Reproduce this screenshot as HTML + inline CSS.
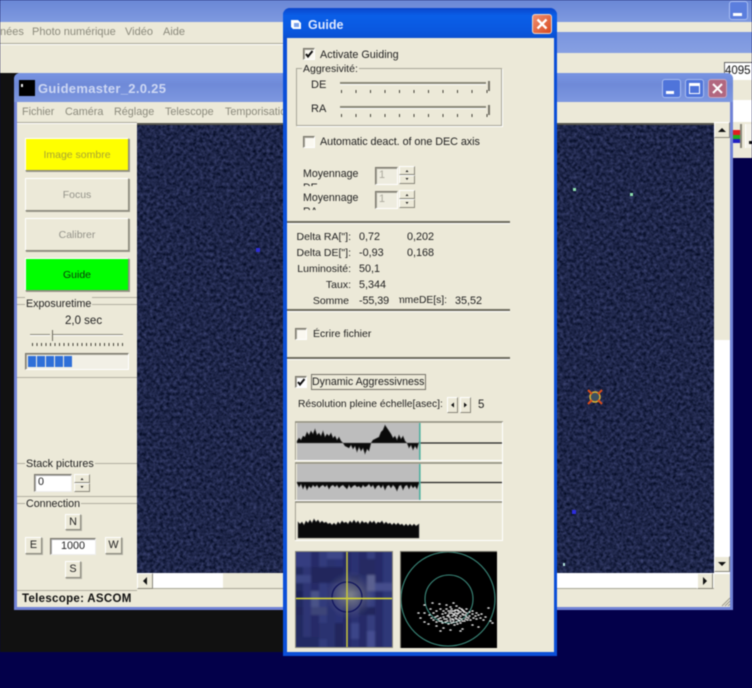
<!DOCTYPE html>
<html lang="fr"><head><meta charset="utf-8"><title>Guidemaster</title>
<style>
html,body{margin:0;padding:0;background:#03004a}
#r{position:relative;width:752px;height:688px;overflow:hidden;background:#03004a;font:10.8px "Liberation Sans",sans-serif;color:#222;filter:blur(.4px)}
#r div,#r span,#r svg{position:absolute;box-sizing:border-box}
.t{white-space:nowrap;line-height:14px;height:14px;margin-top:1px}
.g{color:#8b8a7c}
.b{background:#ece9d8;border:1px solid;border-color:#fff #8a887c #8a887c #fff;box-shadow:1px 1px 0 #b4b2a6;text-align:center;line-height:14px}
.p{font-size:10.5px;line-height:33px;box-shadow:1px 1px 0 #9a988a}
.c{background:#faf8f0;border:1px solid;border-color:#77756a #fff #fff #77756a;box-shadow:inset 1px 1px 0 #a5a397}
.i{background:#fff;border:1px solid;border-color:#77756a #eee #eee #77756a;box-shadow:inset 1px 1px 0 #aaa;padding-left:3px;line-height:15px}
.l{height:2px;background:#6e6c5f;border-bottom:1px solid #fff}
.f{height:1px;background:#b1afa1;border-bottom:0}
.w{background:#ece9d8}
</style></head><body><div id="r">

<!-- background windows -->
<div style="left:0;top:0;width:752px;height:22px;background:linear-gradient(#6a87d6,#7f9ae0)"></div>
<div class="w" style="left:0;top:22px;width:752px;height:51px"></div>
<div style="left:0;top:43px;width:300px;height:2px;background:#a9a797;border-bottom:1px solid #fff"></div>
<div style="left:557px;top:32px;width:195px;height:21px;background:linear-gradient(#7a95df,#87a0e2)"></div>
<div class="t g" style="left:0;top:24px;font-size:11px">nées</div>
<div class="t g" style="left:32px;top:24px;font-size:11px">Photo numérique</div>
<div class="t g" style="left:125px;top:24px;font-size:11px">Vidéo</div>
<div class="t g" style="left:163px;top:24px;font-size:11px">Aide</div>
<div style="left:729px;top:1px;width:19px;height:19px;border-radius:3px;background:#5b7edd;border:1px solid #a9bdf0"></div>
<div style="left:733px;top:13px;width:9px;height:3px;background:#fff"></div>
<div style="left:0;top:73px;width:290px;height:579px;background:#111"></div>
<div class="w" style="left:733px;top:73px;width:19px;height:85px"></div>
<div style="left:733px;top:100px;width:19px;height:22px;background:#fff"></div>
<div style="left:733px;top:158px;width:19px;height:530px;background:#03004a"></div>
<div style="left:733px;top:130px;width:7px;height:5px;background:#e02020"></div>
<div style="left:733px;top:135px;width:7px;height:4px;background:#20b020"></div>
<div style="left:733px;top:139px;width:7px;height:4px;background:#2020c0"></div>
<div style="left:740px;top:124px;width:2px;height:24px;background:#888678"></div>
<div style="left:745px;top:124px;width:7px;height:24px;background:#f4f2e8;border-left:1px solid #fff"></div>
<div style="left:749px;top:141px;width:3px;height:3px;background:#111"></div>
<div style="left:724px;top:62px;width:28px;height:18px;background:#fff;border-left:1px solid #666;border-top:1px solid #666;line-height:16px;font-size:11.5px;color:#111">4095</div>

<!-- main window -->
<div style="left:14px;top:73px;width:719px;height:537px;background:#7082d6;border-radius:6px 6px 0 0"></div>
<div style="left:14px;top:73px;width:719px;height:29px;background:linear-gradient(#7894e2,#6f8ad8 40%,#7e98e0);border-radius:6px 6px 0 0"></div>
<div style="left:19px;top:80px;width:16px;height:16px;background:#000"></div>
<div style="left:21px;top:84px;width:2px;height:3px;background:#eee"></div>
<div class="t" style="left:38px;top:80px;height:16px;line-height:16px;font-size:13px;font-weight:bold;color:#cdd7f3;letter-spacing:.3px">Guidemaster_2.0.25</div>
<div style="left:662px;top:79px;width:19px;height:19px;border-radius:3px;background:#4f74da;border:1px solid #a9bdf0"></div>
<div style="left:666px;top:91px;width:8px;height:3px;background:#fff"></div>
<div style="left:685px;top:79px;width:19px;height:19px;border-radius:3px;background:#4f74da;border:1px solid #a9bdf0"></div>
<div style="left:689px;top:83px;width:11px;height:11px;border:1px solid #fff;border-top-width:3px"></div>
<div style="left:708px;top:79px;width:19px;height:19px;border-radius:3px;background:#b2677f;border:1px solid #c7a6c0"></div>
<svg style="left:708px;top:79px" width="19" height="19"><path d="M5 5L14 14M14 5L5 14" stroke="#fff" stroke-width="2"/></svg>
<div class="w" style="left:17px;top:102px;width:713px;height:505px"></div>
<div class="t g" style="left:22px;top:104px">Fichier</div>
<div class="t g" style="left:65px;top:104px">Caméra</div>
<div class="t g" style="left:114px;top:104px">Réglage</div>
<div class="t g" style="left:165px;top:104px">Telescope</div>
<div class="t g" style="left:225px;top:104px">Temporisation</div>
<div style="left:17px;top:122px;width:120px;height:2px;background:#aaa89a;border-bottom:1px solid #fff"></div>

<!-- star image -->
<svg style="left:137px;top:123px" width="577" height="450">
<filter id="n" x="0" y="0" width="100%" height="100%" color-interpolation-filters="sRGB"><feTurbulence type="fractalNoise" baseFrequency=".3" numOctaves="3" seed="7"/><feColorMatrix values=".3 0 0 0 -.03 .3 0 0 0 0 .42 0 0 0 .08 0 0 0 0 1"/></filter>
<rect width="577" height="450" fill="#1c2750"/><rect width="577" height="450" filter="url(#n)"/>
<rect width="577" height="2" fill="#55544c"/>
<g>
<rect x="436" y="65" width="3" height="3" fill="#8fe0b0"/><rect x="493" y="70" width="3" height="3" fill="#8fe0b0"/>
<rect x="119" y="125" width="4" height="4" fill="#2d2dd8"/>
<rect x="435" y="387" width="4" height="4" fill="#2d2de0"/>
<rect x="426" y="440" width="2" height="3" fill="#b0e0d8"/>
<circle cx="458" cy="274" r="5" fill="#3c5060" stroke="#d8b030" stroke-width="1.500"/>
<path d="M451 267L455 271M465 267L461 271M451 281L455 277M465 281L461 277" stroke="#d84c1c" stroke-width="2"/>
</g>
</svg>

<!-- left panel -->
<div class="b p" style="left:25px;top:138px;width:104px;height:33px;background:#ff0;color:#a8a432">Image sombre</div>
<div class="b p" style="left:25px;top:178px;width:104px;height:33px;color:#94938a">Focus</div>
<div class="b p" style="left:25px;top:218px;width:104px;height:33px;color:#94938a">Calibrer</div>
<div class="b p" style="left:25px;top:258px;width:104px;height:33px;background:#0f0;color:#0b3a0b">Guide</div>
<div class="f" style="left:17px;top:297px;width:120px"></div>
<div class="f" style="left:17px;top:304px;width:120px"></div>
<div class="t w" style="left:25px;top:296px;padding:0 1px;font-size:10.7px">Exposuretime</div>
<div class="t" style="left:65px;top:313px;font-size:11.500px">2,0 sec</div>
<div style="left:30px;top:334px;width:93px;height:2px;background:#8d8b7c;border-bottom:1px solid #fff"></div>
<div style="left:50px;top:330px;width:3px;height:11px;background:#ece9d8;border-right:1px solid #6e6c5f"></div>
<svg style="left:32px;top:342px" width="92" height="5"><line x1="0" y1="2.500" x2="92" y2="2.500" stroke="#444238" stroke-width="3" stroke-dasharray="1 3.500"/></svg>
<div class="c" style="left:25px;top:353px;width:104px;height:17px;background:#f2f0e6"></div>
<div style="left:28px;top:356px;width:8px;height:11px;background:#2f6fd8"></div>
<div style="left:37px;top:356px;width:8px;height:11px;background:#2f6fd8"></div>
<div style="left:46px;top:356px;width:8px;height:11px;background:#2f6fd8"></div>
<div style="left:55px;top:356px;width:8px;height:11px;background:#2f6fd8"></div>
<div style="left:64px;top:356px;width:8px;height:11px;background:#2f6fd8"></div>
<div class="f" style="left:17px;top:377px;width:120px"></div>
<div class="f" style="left:17px;top:463px;width:120px"></div>
<div class="t w" style="left:25px;top:456px;padding:0 1px;font-size:10.8px">Stack pictures</div>
<div class="i" style="left:34px;top:474px;width:38px;height:18px">0</div>
<div class="b" style="left:74px;top:474px;width:16px;height:9px;box-shadow:none"></div>
<div class="b" style="left:74px;top:483px;width:16px;height:9px;box-shadow:none"></div>
<svg style="left:74px;top:474px" width="16" height="18"><path d="M6.500 6H9.500L8 4ZM6.500 12H9.500L8 14Z" fill="#222"/></svg>
<div class="f" style="left:17px;top:496px;width:120px"></div>
<div class="f" style="left:17px;top:503px;width:120px"></div>
<div class="t w" style="left:25px;top:496px;padding:0 1px;font-size:10.7px">Connection</div>
<div class="b" style="left:65px;top:514px;width:16px;height:16px">N</div>
<div class="b" style="left:25px;top:537px;width:17px;height:17px">E</div>
<div class="i" style="left:50px;top:538px;width:46px;height:17px;text-align:center;padding-left:0">1000</div>
<div class="b" style="left:105px;top:537px;width:17px;height:17px">W</div>
<div class="b" style="left:65px;top:561px;width:16px;height:17px">S</div>
<div style="left:17px;top:590px;width:120px;height:1px;background:#b1afa1"></div>
<div class="t" style="left:22px;top:591px;font-size:11.500px;font-weight:bold;color:#111;letter-spacing:.3px">Telescope: ASCOM</div>

<!-- scrollbars -->
<div style="left:714px;top:122px;width:16px;height:452px;background:#fff"></div>
<div class="w" style="left:714px;top:122px;width:16px;height:218px"></div>
<div class="b" style="left:714px;top:122px;width:16px;height:16px;box-shadow:none"></div>
<div class="b" style="left:714px;top:556px;width:16px;height:16px;box-shadow:none"></div>
<svg style="left:714px;top:122px" width="16" height="16"><path d="M4 10H12L8 6Z" fill="#111"/></svg>
<svg style="left:714px;top:556px" width="16" height="16"><path d="M4 6H12L8 10Z" fill="#111"/></svg>
<div style="left:137px;top:573px;width:577px;height:16px;background:#fff;border-bottom:1px solid #a9a797"></div>
<div class="w" style="left:223px;top:573px;width:70px;height:16px;border-bottom:1px solid #a9a797"></div>
<div class="b" style="left:137px;top:573px;width:16px;height:16px;box-shadow:none"></div>
<div class="b" style="left:697px;top:573px;width:16px;height:16px;box-shadow:none"></div>
<svg style="left:137px;top:573px" width="16" height="16"><path d="M10 4V12L6 8Z" fill="#111"/></svg>
<svg style="left:697px;top:573px" width="16" height="16"><path d="M6 4V12L10 8Z" fill="#111"/></svg>
<svg style="left:721px;top:597px" width="10" height="10"><path d="M9 1L1 9M9 4L4 9M9 7L7 9" stroke="#9c9a8c"/></svg>

<!-- Guide dialog -->
<div style="left:283px;top:8px;width:274px;height:648px;background:#0b4fd8;border-radius:7px 7px 0 0"></div>
<div style="left:283px;top:8px;width:274px;height:31px;background:linear-gradient(#0a46cc,#0a5fe8 25%,#0a58e0 70%,#0a4fd0);border-radius:7px 7px 0 0"></div>
<div class="w" style="left:287px;top:38px;width:267px;height:614px"></div>
<svg style="left:290px;top:19px" width="13" height="12"><path d="M1 1H8L11 4V10H3L1 8Z" fill="#fff"/><path d="M4 4H9V8H4Z" fill="#7aa0e8"/></svg>
<div class="t" style="left:308px;top:17px;font-size:12.500px;font-weight:bold;color:#dfe8ff">Guide</div>
<div style="left:532px;top:14px;width:20px;height:20px;border-radius:3px;background:linear-gradient(135deg,#f09070,#d84a20);border:1px solid #f0d8c8"></div>
<svg style="left:532px;top:14px" width="20" height="20"><path d="M5.500 5.500L14.500 14.500M14.500 5.500L5.500 14.500" stroke="#fff" stroke-width="2.300"/></svg>

<div class="c" style="left:303px;top:48px;width:12px;height:12px"></div>
<svg style="left:303px;top:48px" width="12" height="12"><path d="M3 6L5 8.500L9.500 3" fill="none" stroke="#111" stroke-width="2"/></svg>
<div class="t" style="left:320px;top:47px">Activate Guiding</div>
<div style="left:296px;top:68px;width:206px;height:58px;border:1px solid #a8a698;box-shadow:1px 1px 0 #fff"></div>
<div class="t w" style="left:302px;top:61px;padding:0 1px;font-size:10.500px">Aggresivité:</div>
<div class="t" style="left:311px;top:77px;font-size:11px">DE</div>
<div class="t" style="left:311px;top:101px;font-size:11px">RA</div>
<div style="left:340px;top:82px;width:146px;height:3px;background:#8a8878;border-bottom:1px solid #fff"></div>
<div style="left:340px;top:106px;width:146px;height:3px;background:#8a8878;border-bottom:1px solid #fff"></div>
<div style="left:488px;top:81px;width:2px;height:10px;background:#77756a"></div>
<div style="left:488px;top:105px;width:2px;height:10px;background:#77756a"></div>
<svg style="left:340px;top:90px" width="152" height="30"><path d="M1.500 0v3M16 0v3M30.500 0v3M45 0v3M59.500 0v3M74 0v3M88.500 0v3M103 0v3M117.500 0v3M132 0v3M147 0v3M1.500 24v3M16 24v3M30.500 24v3M45 24v3M59.500 24v3M74 24v3M88.500 24v3M103 24v3M117.500 24v3M132 24v3M147 24v3" stroke="#444238"/></svg>

<div class="c" style="left:303px;top:136px;width:12px;height:12px"></div>
<div class="t" style="left:320px;top:134px;letter-spacing:-.05px">Automatic deact. of one DEC axis</div>
<div class="t" style="left:303px;top:166px;overflow:hidden;height:19px;width:70px;white-space:normal;line-height:14px;font-size:10.600px">Moyennage<br>DE</div>
<div class="t" style="left:303px;top:190px;overflow:hidden;height:19px;width:70px;white-space:normal;line-height:14px;font-size:10.600px">Moyennage<br>RA</div>
<div class="c" style="left:375px;top:167px;width:23px;height:18px;padding-left:3px;line-height:15px;color:#aaa89c;background:#eeecdf">1</div>
<div class="c" style="left:375px;top:191px;width:23px;height:18px;padding-left:3px;line-height:15px;color:#aaa89c;background:#eeecdf">1</div>
<div class="b" style="left:399px;top:166px;width:16px;height:9px;box-shadow:none"></div>
<div class="b" style="left:399px;top:175px;width:16px;height:9px;box-shadow:none"></div>
<div class="b" style="left:399px;top:190px;width:16px;height:9px;box-shadow:none"></div>
<div class="b" style="left:399px;top:199px;width:16px;height:9px;box-shadow:none"></div>
<svg style="left:399px;top:166px" width="16" height="42"><path d="M6.500 6H9.500L8 4ZM6.500 12H9.500L8 14ZM6.500 30H9.500L8 28ZM6.500 36H9.500L8 38Z" fill="#222"/></svg>

<div class="l" style="left:287px;top:221px;width:223px;height:3px"></div>
<div class="t" style="left:280px;top:229px;width:71px;text-align:right;font-size:10.500px">Delta RA["]:</div>
<div class="t" style="left:280px;top:245px;width:71px;text-align:right;font-size:10.500px">Delta DE["]:</div>
<div class="t" style="left:280px;top:261px;width:71px;text-align:right;font-size:10.500px">Luminosité:</div>
<div class="t" style="left:280px;top:277px;width:71px;text-align:right;font-size:10.500px">Taux:</div>
<div class="t" style="left:280px;top:293px;width:69px;text-align:right;font-size:10.500px">Somme</div>
<div class="t" style="left:359px;top:229px">0,72</div>
<div class="t" style="left:359px;top:245px">-0,93</div>
<div class="t" style="left:359px;top:261px">50,1</div>
<div class="t" style="left:359px;top:277px">5,344</div>
<div class="t" style="left:359px;top:293px;letter-spacing:-.1px">-55,39</div>
<div class="t" style="left:407px;top:229px">0,202</div>
<div class="t" style="left:407px;top:245px">0,168</div>
<div class="t" style="left:399px;top:293px;width:48px;overflow:hidden"><span style="right:0;top:0;font-size:10.300px">SommeDE[s]:</span></div>
<div class="t" style="left:455px;top:293px">35,52</div>
<div class="l" style="left:287px;top:309px;width:223px;height:3px"></div>
<div class="c" style="left:295px;top:328px;width:12px;height:12px"></div>
<div class="t" style="left:313px;top:326px;font-size:10.500px">Écrire fichier</div>
<div class="l" style="left:287px;top:357px;width:223px;height:3px"></div>
<div class="c" style="left:295px;top:376px;width:12px;height:12px;background:#fff"></div>
<svg style="left:295px;top:376px" width="12" height="12"><path d="M3 6L5 8.500L9.500 3" fill="none" stroke="#111" stroke-width="2"/></svg>
<div style="left:311px;top:374px;width:115px;height:16px;border:1px solid #77756a"></div>
<div class="t" style="left:312px;top:374px;font-size:10.600px">Dynamic Aggressivness</div>
<div class="t" style="left:298px;top:397px;font-size:10.300px">Résolution pleine échelle[asec]:</div>
<div class="b" style="left:447px;top:397px;width:11px;height:16px;box-shadow:none"></div>
<div class="b" style="left:460px;top:397px;width:11px;height:16px;box-shadow:none"></div>
<svg style="left:447px;top:397px" width="24" height="16"><path d="M7 5.500V10.500L4 8ZM17 5.500V10.500L20 8Z" fill="#111"/></svg>
<div class="t" style="left:478px;top:397px;font-size:11.500px">5</div>

<!-- charts -->
<svg style="left:295px;top:421px" width="208" height="120">
<path d="M0 1V39M0 1H208M0 42V79M0 42H208M0 81V119M0 81H208" stroke="#8b8a7c" stroke-width="1.500" fill="none"/>
<path d="M0 39.500H208M0 79.500H208M0 119.500H208M207.500 1V120" stroke="#fff" stroke-width="1" fill="none"/>
<rect x="2" y="2" width="122" height="37" fill="#bdbdbd"/><rect x="2" y="43" width="122" height="36" fill="#bdbdbd"/>
<path d="M124 22H207M124 61.500H207" stroke="#222" stroke-width="1.300"/>
<rect x="124" y="2" width="1.600" height="37" fill="#50b0a0"/><rect x="124" y="43" width="1.600" height="36" fill="#50b0a0"/>
<path d="M2 20L4 17 6 19 8 15 10 16 12 11 14 14 16 10 18 13 20 8 22 14 24 12 26 15 28 10 30 16 32 13 34 15 36 12 38 17 40 15 42 19 44 16 46 20 48 22 50 25 52 26 54 27 56 24 58 28 60 25 62 31 64 26 66 30 68 27 70 33 72 28 74 30 76 22 78 19 80 18 82 17 84 16 86 11 88 9 90 4 92 7 94 10 96 13 98 17 100 15 102 19 104 14 106 18 108 15 110 20 112 22 114 27 116 24 118 29 120 25 122 28 124 21V22H2Z" fill="#0a0a0a" stroke="#555" stroke-width=".6"/>
<path d="M2 62L4 66 6 63 8 68 10 64 12 69 14 65 16 67 18 64 20 66 22 64 24 67 26 65 28 64 30 66 32 64 34 68 36 65 38 64 40 66 42 64 44 67 46 65 48 64 50 66 52 68 54 64 56 67 58 65 60 64 62 66 64 65 66 67 68 64 70 66 72 65 74 63 76 66 78 64 80 68 82 65 84 64 86 67 88 64 90 69 92 65 94 64 96 67 98 64 100 66 102 70 104 65 106 64 108 69 110 65 112 64 114 68 116 64 118 67 120 65 122 68 124 62V61H2Z" fill="#0a0a0a" stroke="#555" stroke-width=".6"/>
<path d="M3 117V101L5 103 7 101 9 104 11 100 13 102 15 99 17 102 19 98 21 101 23 99 25 102 27 100 29 102 31 101 33 103 35 102 37 104 39 102 41 104 43 101 45 103 47 100 49 102 51 101 53 103 55 100 57 102 59 99 61 102 63 100 65 103 67 100 69 102 71 101 73 103 75 100 77 102 79 100 81 103 83 101 85 102 87 100 89 103 91 101 93 103 95 102 97 104 99 102 101 104 103 102 105 104 107 103 109 105 111 103 113 105 115 103 117 105 119 103 121 105 124 103V117Z" fill="#0a0a0a" stroke="#555" stroke-width=".6"/>
</svg>

<!-- star preview -->
<svg style="left:295px;top:551px" width="98" height="97">
<defs><radialGradient id="h" cx="50%" cy="50%" r="50%"><stop offset="0" stop-color="#a8ac98" stop-opacity=".7"/><stop offset=".5" stop-color="#7c7e88" stop-opacity=".45"/><stop offset="1" stop-color="#555a90" stop-opacity="0"/></radialGradient><filter id="s" x="0" y="0" width="100%" height="100%"><feGaussianBlur stdDeviation="1"/></filter></defs>
<rect width="98" height="97" fill="#282e6a"/>
<g filter="url(#s)">
<rect x="0" width="8" height="97" fill="#242b60"/><rect x="8" width="8" height="97" fill="#2e3574"/><rect x="16" width="8" height="97" fill="#262c68"/><rect x="24" width="8" height="97" fill="#323b7c"/><rect x="32" width="8" height="97" fill="#293070"/><rect x="40" width="8" height="97" fill="#2c3374"/><rect x="48" width="8" height="97" fill="#262c68"/><rect x="56" width="8" height="97" fill="#2c3272"/><rect x="64" width="8" height="97" fill="#262c68"/><rect x="72" width="8" height="97" fill="#343d7e"/><rect x="80" width="8" height="97" fill="#262c68"/><rect x="88" width="10" height="97" fill="#2f3778"/>
<rect x="0" y="0" width="16" height="16" fill="#343e80"/><rect x="32" y="0" width="16" height="8" fill="#3c4688"/><rect x="64" y="8" width="16" height="16" fill="#262c62"/>
<rect x="16" y="16" width="32" height="16" fill="#20265c"/><rect x="0" y="24" width="16" height="8" fill="#3a4484"/><rect x="56" y="24" width="8" height="16" fill="#222860"/><rect x="72" y="24" width="8" height="16" fill="#5a6090"/><rect x="80" y="32" width="18" height="8" fill="#454e8c"/>
<rect x="0" y="40" width="8" height="8" fill="#1c2256"/><rect x="16" y="40" width="8" height="16" fill="#4a5288"/><rect x="64" y="56" width="16" height="8" fill="#20265c"/><rect x="0" y="56" width="8" height="8" fill="#20265c"/><rect x="16" y="56" width="16" height="8" fill="#3c4478"/><rect x="80" y="48" width="8" height="16" fill="#262c68"/>
<rect x="24" y="72" width="16" height="16" fill="#2a3270"/><rect x="40" y="72" width="8" height="25" fill="#20265c"/><rect x="0" y="86" width="24" height="11" fill="#232a64"/><rect x="72" y="80" width="8" height="17" fill="#454e90"/><rect x="56" y="72" width="8" height="16" fill="#3a4488"/>
<ellipse cx="55" cy="44" rx="26" ry="24" fill="url(#h)"/>
</g>
<circle cx="52" cy="46" r="15" fill="none" stroke="#10145c" stroke-width="1.300"/>
<path d="M0 47.500H98" stroke="#dede30" stroke-width="1.500"/><path d="M52 0V97" stroke="#c8c83c" stroke-width="1.500"/>
<rect x=".5" y=".5" width="97" height="96" fill="none" stroke="#8b8a7c"/>
</svg>

<!-- target -->
<svg style="left:400px;top:551px" width="97" height="97">
<rect width="97" height="97" fill="#000"/>
<circle cx="48" cy="48" r="47" fill="none" stroke="#3c8a7c" stroke-width="1.100"/>
<circle cx="49" cy="48" r="24" fill="none" stroke="#3c8a7c" stroke-width="1.100"/>
<path d="M24 54h1M32 52h1M39 53h1M30 58h1M46 54h1M53 52h1M50 56h1M56 55h1M59 57h1M62 59h1M66 58h1M88 57h1M72 60h1M76 62h1M81 63h1M85 66h1M90 70h1M92 72h1M24 62h1M29 64h1M33 62h1M36 60h1M40 58h1M43 60h1M46 58h1M48 60h1M51 58h1M54 60h1M57 59h1M60 61h1M63 60h1M66 62h1M69 61h1M72 63h1M75 65h1M78 64h1M42 63h1M45 62h1M48 64h1M51 62h1M54 64h1M57 63h1M60 65h1M63 64h1M66 66h1M69 65h1M37 65h1M40 67h1M43 66h1M46 68h1M49 66h1M52 68h1M55 67h1M58 69h1M61 68h1M64 70h1M67 69h1M33 69h1M36 71h1M39 70h1M42 72h1M45 71h1M48 73h1M51 72h1M54 74h1M57 73h1M60 72h1M24 71h1M28 73h1M20 67h1M18 62h1M36 75h1M43 77h1M40 80h1M62 78h1M72 74h1M78 76h1M60 80h1M50 79h1M52 60h1M55 62h1M58 62h1M50 70h1M53 71h1M47 70h1M56 71h1M50 60h1M53 63h1M56 65h1M59 67h1M62 63h1M65 64h1M68 67h1M47 65h1M44 68h1M50 68h1M53 69h1M56 68h1M59 70h1M62 70h1M65 68h1M70 69h1M73 67h1M76 68h1M80 67h1M83 69h1M41 70h1M38 68h1M35 66h1M31 67h1M49 62h1M52 65h1M55 59h1M58 60h1M61 58h1M64 61h1" stroke="#e0e0e0" stroke-width="1.600" stroke-linecap="round"/>
<path d="M.5 97V.5H97" fill="none" stroke="#77756a"/>
</svg>

</div></body></html>
